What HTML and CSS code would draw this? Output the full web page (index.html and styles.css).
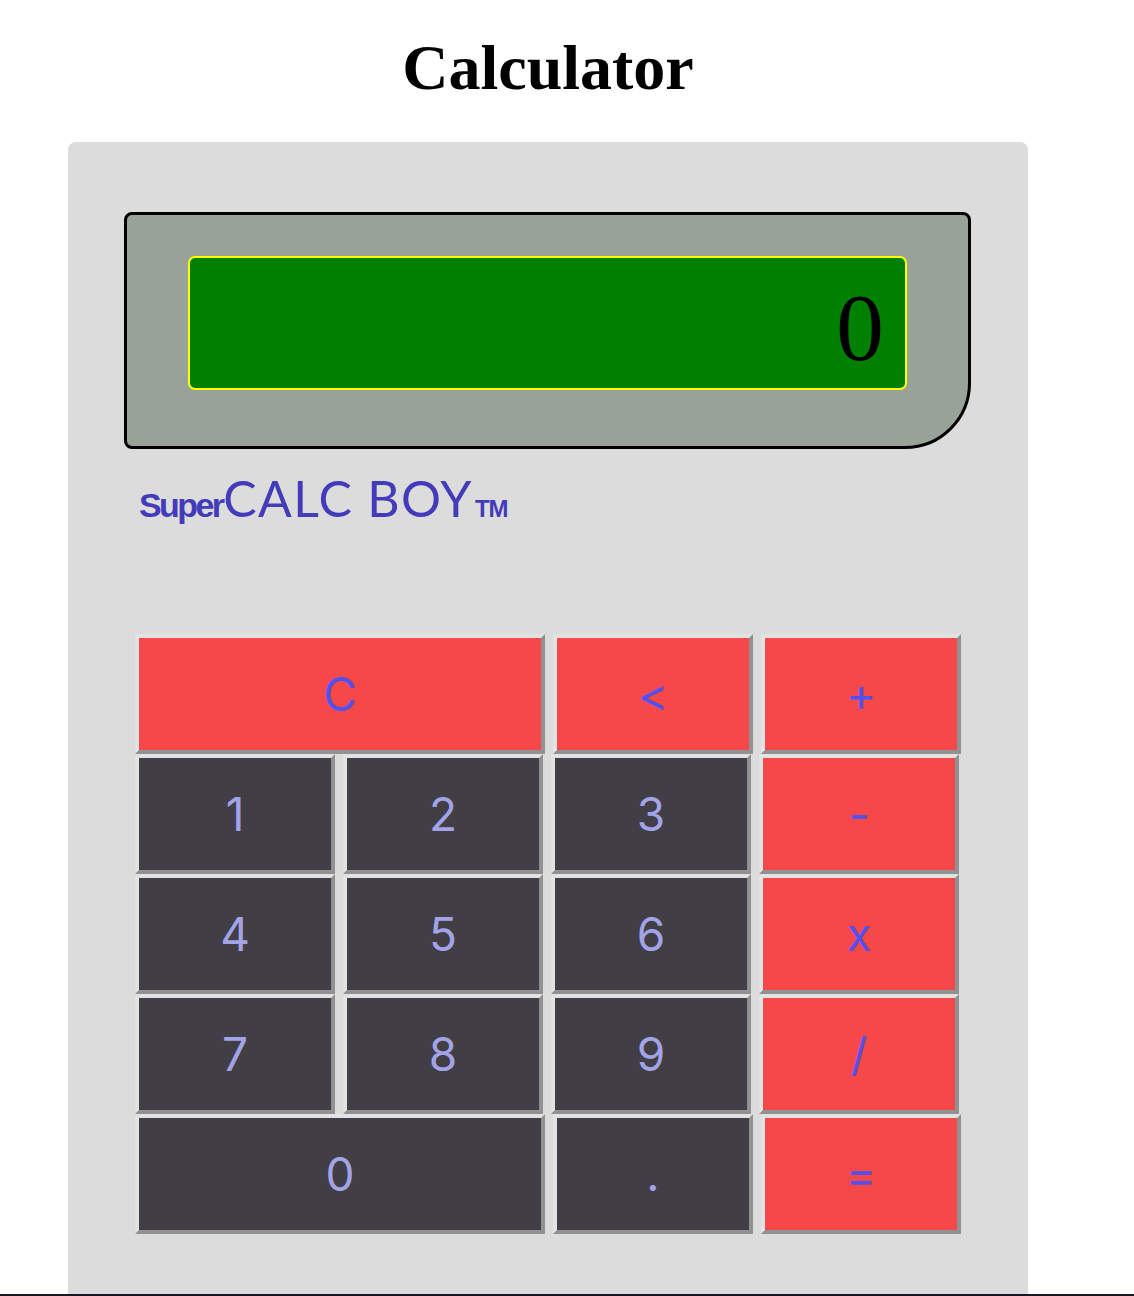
FILE: index.html
```html
<!DOCTYPE html>
<html>
<head>
<meta charset="utf-8">
<title>Calculator</title>
<link rel="stylesheet" href="styles.css">
</head>
<body>
<div class="page">
  <h1 class="title">Calculator</h1>
  <div class="calc">
    <div class="frame">
      <div class="screen"><span class="value">0</span></div>
    </div>
    <div class="brand"><span class="super">Super</span><span class="name">CALC BOY</span><span class="tm">TM</span></div>
    <div class="keys">
      <div class="row">
        <button class="key op wide">C</button>
        <button class="key op">&lt;</button>
        <button class="key op">+</button>
      </div>
      <div class="row">
        <button class="key num">1</button>
        <button class="key num">2</button>
        <button class="key num">3</button>
        <button class="key op">-</button>
      </div>
      <div class="row">
        <button class="key num">4</button>
        <button class="key num">5</button>
        <button class="key num">6</button>
        <button class="key op">x</button>
      </div>
      <div class="row">
        <button class="key num">7</button>
        <button class="key num">8</button>
        <button class="key num">9</button>
        <button class="key op">/</button>
      </div>
      <div class="row">
        <button class="key num wide">0</button>
        <button class="key num">.</button>
        <button class="key op">=</button>
      </div>
    </div>
  </div>
</div>
<div class="bottom-bar"></div>
</body>
</html>
```

FILE: styles.css
```css
html, body {
  margin: 0;
  padding: 0;
  background: #ffffff;
}

body {
  overflow: hidden;
}

.page {
  padding-left: 68px;
  width: 960px;
}

.title {
  margin: 0;
  padding-top: 32px;
  font-family: "Liberation Serif", "Times New Roman", serif;
  font-weight: bold;
  font-size: 64px;
  line-height: 71px;
  text-align: center;
  color: #000;
}

.calc {
  margin-top: 39px;
  width: 960px;
  height: 1200px;
  background: #dcdcdc;
  border-radius: 8px 8px 0 0;
  padding-top: 70px;
  box-sizing: border-box;
}

.frame {
  margin-left: 56px;
  width: 847px;
  height: 237px;
  box-sizing: border-box;
  border: 3px solid #000;
  border-radius: 8px 8px 66px 8px;
  background: #98a299;
  padding: 41px 61px 0 61px;
}

.screen {
  height: 134px;
  box-sizing: border-box;
  background: #008000;
  border: 2px solid #ffff00;
  border-radius: 7px;
  display: flex;
  align-items: center;
  justify-content: flex-end;
  padding-right: 21px;
}

.value {
  font-family: "Liberation Serif", "Times New Roman", serif;
  font-size: 96px;
  line-height: 96px;
  color: #000;
  margin-top: 10px;
}

.brand {
  margin-left: 71px;
  height: 185px;
  padding-top: 24px;
  box-sizing: border-box;
  color: #443bbb;
  display: flex;
  align-items: baseline;
  font-family: "Lato", "Liberation Sans", sans-serif;
  line-height: 50px;
}

.super {
  font-family: "Liberation Sans", Arial, sans-serif;
  font-weight: bold;
  font-size: 34px;
  letter-spacing: -2.6px;
}

.name {
  font-size: 50px;
  letter-spacing: 1.3px;
  margin-left: 1px;
}

.tm {
  font-family: "Liberation Sans", Arial, sans-serif;
  font-weight: bold;
  font-size: 24px;
  letter-spacing: -1px;
  margin-left: 2px;
}

.keys {
  margin-left: 67px;
  display: flex;
  flex-direction: column;
}

.row {
  display: flex;
  gap: 8px;
}

.key {
  width: 200px;
  height: 120px;
  box-sizing: border-box;
  border-style: solid;
  border-width: 4px;
  border-color: #e3e3e3 #919191 #919191 #e3e3e3;
  margin: 0;
  padding: 0;
  font-family: "Inter", "Liberation Sans", sans-serif;
  font-size: 46px;
  font-weight: 400;
  display: flex;
  align-items: center;
  justify-content: center;
}

.key.wide {
  width: 410px;
}

.num {
  background: #413f45;
  color: #a3a3e8;
}

.op {
  background: #f64848;
  color: #5151f0;
}

.bottom-bar {
  position: fixed;
  left: 0;
  right: 0;
  bottom: 0;
  height: 2px;
  background: #151822;
}
```
